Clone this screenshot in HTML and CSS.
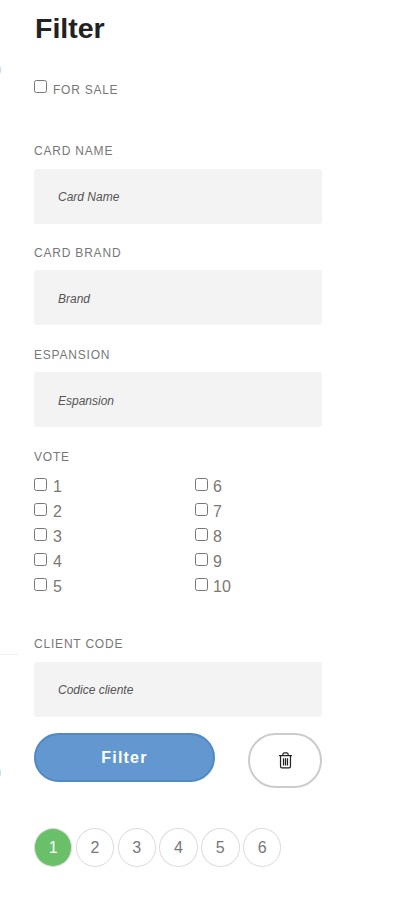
FILE: index.html
```html
<!DOCTYPE html>
<html lang="en">
<head>
<meta charset="utf-8">
<title>Filter</title>
<link rel="stylesheet" href="styles.css">
</head>
<body>
<span class="edge edge-top"></span>
<span class="edge edge-bottom"></span>
<span class="edge-line"></span>
<main class="filter">
  <h1 class="title">Filter</h1>
  <label class="sale"><input type="checkbox" class="check"><span>FOR SALE</span></label>
  <div class="field field-first">
    <label class="label">CARD NAME</label>
    <input class="text" type="text" placeholder="Card Name">
  </div>
  <div class="field field-brand">
    <label class="label">CARD BRAND</label>
    <input class="text" type="text" placeholder="Brand">
  </div>
  <div class="field field-exp">
    <label class="label">ESPANSION</label>
    <input class="text" type="text" placeholder="Espansion">
  </div>
  <div class="vote">
    <div class="label">VOTE</div>
    <div class="vote-grid">
      <label class="opt"><input type="checkbox" class="check"><span>1</span></label>
      <label class="opt"><input type="checkbox" class="check"><span>6</span></label>
      <label class="opt"><input type="checkbox" class="check"><span>2</span></label>
      <label class="opt"><input type="checkbox" class="check"><span>7</span></label>
      <label class="opt"><input type="checkbox" class="check"><span>3</span></label>
      <label class="opt"><input type="checkbox" class="check"><span>8</span></label>
      <label class="opt"><input type="checkbox" class="check"><span>4</span></label>
      <label class="opt"><input type="checkbox" class="check"><span>9</span></label>
      <label class="opt"><input type="checkbox" class="check"><span>5</span></label>
      <label class="opt"><input type="checkbox" class="check"><span>10</span></label>
    </div>
  </div>
  <div class="field field-client">
    <label class="label">CLIENT CODE</label>
    <input class="text" type="text" placeholder="Codice cliente">
  </div>
  <div class="actions">
    <button class="btn-filter" type="button">Filter</button>
    <button class="btn-clear" type="button" aria-label="Clear">
      <svg width="15" height="17" viewBox="0 0 16 18" fill="none" stroke="#222" stroke-width="1.3">
        <path d="M1 3.8h14"/>
        <path d="M5.2 3.6V2.4a1.5 1.5 0 0 1 1.5-1.5h2.6a1.5 1.5 0 0 1 1.5 1.5v1.2"/>
        <path d="M2.7 3.8v11.6c0 .9.6 1.5 1.5 1.5h7.6c.9 0 1.5-.6 1.5-1.5V3.8"/>
        <path d="M5.9 6.6v7.6M8 6.6v7.6M10.1 6.6v7.6"/>
      </svg>
    </button>
  </div>
  <nav class="pager">
    <a class="page page-on">1</a>
    <a class="page">2</a>
    <a class="page">3</a>
    <a class="page">4</a>
    <a class="page">5</a>
    <a class="page">6</a>
  </nav>
</main>
</body>
</html>
```
FILE: styles.css
```css
* { box-sizing: border-box; }
html, body { margin: 0; padding: 0; background: #fff; }
body {
  position: relative;
  height: 901px;
  overflow: hidden;
  font-family: "Liberation Sans", Arial, sans-serif;
  color: #777;
}
.edge {
  position: absolute;
  left: -15px;
  width: 16px;
  height: 16px;
  border-radius: 50%;
  background: #b9dcf8;
}
.edge-top { top: 62px; }
.edge-bottom { top: 765px; }
.edge-line {
  position: absolute;
  left: 0;
  top: 654px;
  width: 18px;
  height: 1px;
  background: #f2f2f2;
}
.filter { padding: 0 0 0 34px; width: 322px; }
.title {
  margin: 0;
  padding: 11px 0 0 1px;
  font-size: 28.5px;
  line-height: 34px;
  font-weight: 700;
  color: #222;
}
.check {
  width: 13px;
  height: 13px;
  margin: 0;
  flex: none;
}
.sale {
  display: flex;
  align-items: flex-start;
  gap: 6px;
  margin-top: 35px;
  height: 20px;
  font-size: 12px;
  letter-spacing: .75px;
  color: #777;
}
.sale span { line-height: 20px; }
.label {
  display: block;
  height: 18px;
  font-size: 12px;
  line-height: 18px;
  letter-spacing: .8px;
  color: #777;
}
.field .label { margin-bottom: 9px; }
.field-first { margin-top: 42px; }
.field-brand { margin-top: 20px; }
.field-exp { margin-top: 21px; }
.field-brand .label, .field-exp .label { margin-bottom: 8px; }
.text {
  display: block;
  width: 288px;
  height: 55px;
  padding: 0 24px;
  border: 0;
  border-radius: 3px;
  background: #f3f3f3;
  font: italic 12px "Liberation Sans", Arial, sans-serif;
  color: #555;
}
.text::placeholder { color: #555; opacity: 1; }
.field-brand .text, .field-exp .text { padding-top: 2px; }
.vote { margin-top: 21px; }
.vote-grid {
  display: grid;
  grid-template-columns: 161px 127px;
  grid-auto-rows: 25px;
  margin-top: 10px;
}
.opt {
  display: flex;
  align-items: flex-start;
  gap: 6px;
  font-size: 16px;
  line-height: 20px;
  color: #7d7774;
}
.opt:nth-child(even) { gap: 5px; }
.opt .check { margin-top: 2px; }
.opt span { padding-top: 1px; }
.field-client { margin-top: 34px; }
.actions {
  display: flex;
  align-items: flex-start;
  gap: 33px;
  margin-top: 16px;
}
.btn-filter {
  width: 181px;
  height: 49px;
  padding: 0;
  border: 2px solid #5289c4;
  border-radius: 25px;
  background: #6298cf;
  color: #fff;
  font: 700 16px "Liberation Sans", Arial, sans-serif;
  letter-spacing: 1.2px;
}
.btn-clear {
  display: flex;
  align-items: center;
  justify-content: center;
  width: 74px;
  height: 55px;
  padding: 0;
  border: 2px solid #ccc;
  border-radius: 28px;
  background: #fff;
}
.pager {
  display: flex;
  gap: 3.4px;
  margin-top: 40px;
}
.page {
  display: flex;
  align-items: center;
  justify-content: center;
  width: 38.4px;
  height: 39px;
  border: 1px solid #ddd;
  border-radius: 50%;
  font-size: 16px;
  color: #777;
}
.page-on {
  background: #6abf69;
  border-color: #ddd;
  color: #fff;
}
```
